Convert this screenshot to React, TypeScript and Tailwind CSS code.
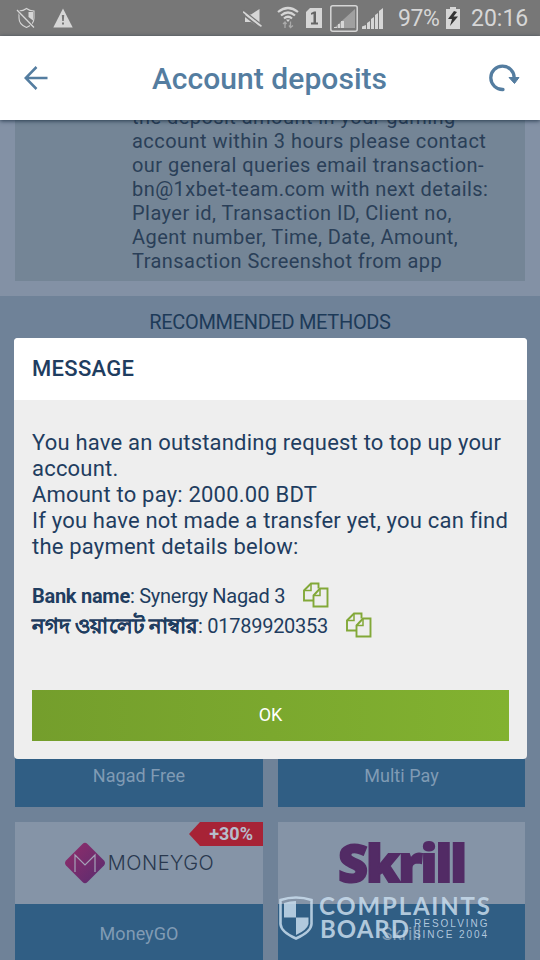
import type { ReactNode } from "react";

const NOTICE_LINES = [
  "the deposit amount in your gaming",
  "account within 3 hours please contact",
  "our general queries email transaction-",
  "bn@1xbet-team.com with next details:",
  "Player id, Transaction ID, Client no,",
  "Agent number, Time, Date, Amount,",
  "Transaction Screenshot from app",
];

const MESSAGE_LINES = [
  "You have an outstanding request to top up your",
  "account.",
  "Amount to pay: 2000.00 BDT",
  "If you have not made a transfer yet, you can find",
  "the payment details below:",
];

function StatusBar() {
  return (
    <div className="flex h-9 shrink-0 items-center bg-[#777777] text-[#d6d6d6]">
      {/* shield off */}
      <svg className="ml-4 h-[22px] w-[20px]" viewBox="0 0 20 22" fill="none" stroke="currentColor">
        <path d="M3 4 C6 4 8 3.500 10.5 1.5 C13 3.5 15.500 4 18 4 V11 C18 16 14.500 19 10.500 20.500 C6.500 19 3 16 3 11 Z" strokeWidth="1.1" />
        <path d="M12.500 5 H17 V13.500 L12.500 10 Z" fill="currentColor" stroke="none" />
        <path d="M1 3 L18 20.500" stroke="#777777" strokeWidth="3" />
        <path d="M1 3 L18 20.500" strokeWidth="1.3" />
      </svg>
      {/* warning */}
      <svg className="ml-[17px] h-[20px] w-[20px]" viewBox="0 0 20 20">
        <path d="M10 .5 L19.700 19.500 H.3 Z" fill="currentColor" />
        <path d="M8.800 7 H11.200 L10.800 13 H9.200 Z M9 14.500 H11 V16.500 H9 Z" fill="#777777" />
      </svg>

      <div className="ml-auto flex items-center">
        {/* muted speaker */}
        <svg className="h-[20px] w-[20px]" viewBox="0 0 20 20">
          <path d="M2 6.500 H8 L16.500 1 V19 L8 14 H2 Z" fill="currentColor" />
          <path d="M0 2 L19 17.500 M-1 5.500 L18 20.500" stroke="#777777" strokeWidth="1.800" />
          <path d="M0 3.700 L18.500 18.300" stroke="currentColor" strokeWidth="1.700" />
        </svg>
        {/* wifi */}
        <svg className="ml-[14px] h-[24px] w-[22px]" viewBox="0 0 22 24" fill="none" stroke="currentColor">
          <path d="M1 6 Q11 -2 21 6" strokeWidth="2.200" />
          <path d="M4 9.500 Q11 3.500 18 9.500" strokeWidth="2.200" />
          <path d="M7 12.500 Q11 9 15 12.500" strokeWidth="2.200" />
          <path d="M9 13.500 H13 L11 16 Z" fill="currentColor" stroke="none" />
          <path d="M8 22 V16 M6 18 L8 16 L9.500 18 M13.500 15.500 V21.500 M12 19.500 L13.500 21.500 L16 19.500" stroke="#aaaaaa" strokeWidth="1.300" />
        </svg>
        {/* sim slot */}
        <svg className="ml-[7px] h-[20px] w-[16px]" viewBox="0 0 16 20">
          <path d="M4 0 H16 V20 H0 V4 Z" fill="currentColor" />
          <path d="M5 5 L8 3.500 H10 V14.500 H12 V16.500 H5 V14.500 H7.500 V6 L5 6.800 Z" fill="#666666" />
        </svg>
        {/* first network */}
        <svg className="ml-[8px] h-[27px] w-[28px]" viewBox="0 0 28 27">
          <rect x=".8" y=".8" width="26.400" height="25.400" rx="2" fill="none" stroke="currentColor" strokeWidth="1.500" />
          <path d="M4 23 L25 4 V23 Z" fill="#a0a0a0" />
          <path d="M4 23 V22 H7 V23 Z M8 23 V19 H10 V23 Z M11 23 V16 H14 V23 Z" fill="currentColor" />
        </svg>
        {/* second network */}
        <svg className="ml-[4px] h-[22px] w-[22px]" viewBox="0 0 22 22" fill="currentColor">
          <path d="M0 22 V19.500 L4 18 V22 Z M5 22 V16 L8 14 V22 Z M9 22 V12 L12 10 V22 Z M13 22 V8 L16 6 V22 Z M17 22 V4 L21 1 V22 Z" />
        </svg>
        <span className="ml-[14px] w-[44px] whitespace-nowrap text-[23px] leading-none tracking-[-0.4px]">97%</span>
        {/* charging battery */}
        <svg className="ml-[4px] h-[22px] w-[14px]" viewBox="0 0 14 22">
          <path d="M4 0 H10 V2 H14 V22 H0 V2 H4 Z" fill="currentColor" />
          <path d="M8 4 L2 12 H6 L4 19 L12 9.500 H7.500 L11 5 Z" fill="#333333" />
        </svg>
        <span className="ml-[11px] mr-[12px] w-[57px] whitespace-nowrap pt-px text-[23px] leading-none">20:16</span>
      </div>
    </div>
  );
}

function Header() {
  return (
    <header className="relative z-10 flex h-[84px] shrink-0 items-center justify-between bg-white px-6 text-[#547da0] shadow-[0_1px_4px_rgba(20,40,60,0.8)]">
      <svg className="h-[24px] w-[24px]" viewBox="0 0 24 24" fill="none" stroke="currentColor" strokeWidth="2.500">
        <path d="M23.500 12 H2 M12.500 1 L1.700 12 L12.500 23" />
      </svg>
      <h1 className="ml-[3px] text-[30px] font-medium tracking-[0.05px]">Account deposits</h1>
      <svg className="-mr-[4px] h-[28px] w-[32px]" viewBox="0 0 32 28" fill="none">
        <path d="M15 25.500 A11.700 11.700 0 1 1 26.200 14" stroke="currentColor" strokeWidth="3.300" strokeLinecap="round" />
        <path d="M21 13.500 H31 L26.500 19.500 Z" fill="currentColor" stroke="currentColor" strokeLinejoin="round" />
      </svg>
    </header>
  );
}

function MoneyGoLogo() {
  return (
    <div className="flex items-center">
      <svg className="h-[42px] w-[42px]" viewBox="0 0 42 42">
        <defs>
          <linearGradient id="moneygo" x1="0" y1="0" x2="1" y2="1">
            <stop offset="0" stopColor="#922d6a" />
            <stop offset="1" stopColor="#582c70" />
          </linearGradient>
        </defs>
        <path d="M18.500 2 Q21 -.5 23.500 2 L40 18.500 Q42 21 40 23.500 L23.500 40 Q21 42.500 18.500 40 L2 23.500 Q0 21 2 18.500 Z" fill="url(#moneygo)" />
        <path d="M11 30 V13 L21 23 L31 13 V30" fill="none" stroke="#a4a2b8" strokeWidth="1.200" />
      </svg>
      <span className="ml-[2px] font-[Inter] text-[20px] font-light leading-none tracking-[0.5px] text-[#29384e]">MONEYGO</span>
    </div>
  );
}

function SkrillLogo() {
  return (
    <span className="pb-[2px] font-['Open_Sans'] text-[52px] font-extrabold leading-none tracking-[-2px] text-[#522b65] [-webkit-text-stroke:1.8px_#522b65]">Skrill</span>
  );
}

function Method({ name, badge, children }: { name: string; badge?: string; children?: ReactNode }) {
  return (
    <div className="relative h-[143px]">
      <div className="flex h-[82px] items-center justify-center bg-[#8594a7]">{children}</div>
      <div className="flex h-[61px] items-center justify-center bg-[#305e84] pb-[2px] text-[18px] tracking-[0.05px] text-[#809bb4]">{name}</div>
      {badge && (
        <span className="absolute right-0 top-0 flex h-6 w-[74px] items-center justify-end bg-[#a72336] pb-[2px] pr-[10px] text-[18px] font-bold text-[#b6bccb] [clip-path:polygon(0_50%,11px_0,100%_0,100%_100%,11px_100%)]">
          {badge}
        </span>
      )}
    </div>
  );
}

function CopyIcon() {
  return (
    <svg className="h-[26px] w-[26px]" viewBox="0 0 26 26" fill="none" stroke="#82a838" strokeWidth="1.900">
      <path d="M10 18.500 H1 V8.500 L8 1.500 H15.500 V6.500" />
      <path d="M8 1.500 V8.500 H1" strokeWidth="1.500" />
      <path d="M10.500 13.500 L17 6.500 H24.500 V24.500 H10.500 Z" />
      <path d="M17 6.500 V13.500 H10.500" strokeWidth="1.500" />
    </svg>
  );
}

function MessageDialog() {
  return (
    <div className="absolute left-[14px] top-[338px] z-20 flex h-[421px] w-[513px] flex-col overflow-hidden rounded-[4px] bg-[#eeeeee] text-[#1f3d60]">
      <div className="flex h-[62px] items-center bg-white px-[18px] pb-[2px] text-[22px] font-medium tracking-[0.3px]">MESSAGE</div>
      <div className="flex flex-1 flex-col px-[18px] pb-[18px] pt-[30px]">
        <div className="whitespace-nowrap text-[22px] leading-[26px] tracking-[0.2px]">
          {MESSAGE_LINES.map((line) => (
            <p key={line}>{line}</p>
          ))}
        </div>
        <div className="mt-[20px] whitespace-nowrap text-[20px] leading-[30px] tracking-[-0.27px]">
          <p className="flex h-[30px] items-center">
            <span className="pt-[2px]"><b className="font-bold">Bank name</b>: Synergy Nagad 3</span>
            <span className="ml-[18px]"><CopyIcon /></span>
          </p>
          <p className="flex h-[30px] items-center">
            <span className="pt-[2px]">
              <b className="text-[21px] font-bold leading-none tracking-[0.05px] [-webkit-text-stroke:0.2px_#1f3d60]">নগদ ওয়ালেট নাম্বার</b>: 01789920353
            </span>
            <span className="ml-[18px]"><CopyIcon /></span>
          </p>
        </div>
        <button className="mt-auto h-[51px] bg-linear-to-r from-[#749e2c] to-[#82b230] pb-[2px] text-[18px] text-white">OK</button>
      </div>
    </div>
  );
}

function Watermark() {
  return (
    <div className="absolute left-[278px] top-[895px] z-10 flex text-[#c8dcec]/85">
      <svg className="h-[46px] w-[36px]" viewBox="0 0 36 46">
        <path d="M2.500 5 Q10 2.500 18 2.500 Q26 2.500 33.500 5 V29 Q33 37 18 43.500 Q3 37 2.500 29 Z" fill="none" stroke="currentColor" strokeWidth="2.600" />
        <path d="M6 8 Q12 6 18 6 V22.500 H6 Z M18 22.500 H30.500 V29 Q29 35 18 40 Z" fill="currentColor" />
      </svg>
      <div className="-mt-px ml-[5px] font-[Lato] font-bold">
        <p className="h-[23px] whitespace-nowrap text-[24px] leading-[23px] tracking-[1.800px]">COMPLAINTS</p>
        <div className="flex">
          <p className="w-[95px] pl-px text-[24px] leading-[23px] tracking-[1px]">BOARD</p>
          <div className="whitespace-nowrap pt-px font-['Liberation_Sans'] text-[10px] font-normal leading-[11px] tracking-[2px]">
            <p>RESOLVING</p>
            <p className="tracking-[1.950px]">SINCE 2004</p>
          </div>
        </div>
      </div>
    </div>
  );
}

export default function App() {
  return (
    <div className="relative flex h-[960px] w-[540px] flex-col overflow-hidden bg-[#6f8298] font-[Roboto,'Noto_Sans',sans-serif]">
      <StatusBar />
      <Header />

      {/* NOTICE */}
      <section className="h-[176px] shrink-0 bg-[#8391a5] px-[15px] pb-[15px]">
        <div className="flex h-[161px] flex-col justify-end overflow-hidden bg-[#748596] pb-2 pl-[117px] text-[20px] leading-6 tracking-[0.45px] text-[#2a3f58]">
          {NOTICE_LINES.map((line) => (
            <p key={line} className="shrink-0 whitespace-nowrap">{line}</p>
          ))}
        </div>
      </section>

      {/* METHODS */}
      <section className="px-[15px]">
        <h2 className="flex h-[52px] items-center justify-center text-[20px] tracking-[-0.33px] text-[#1d3a58]">RECOMMENDED METHODS</h2>
        <div className="grid grid-cols-[248px_247px] gap-[15px] pt-[316px]">
          <Method name="Nagad Free" />
          <Method name="Multi Pay" />
          <Method name="MoneyGO" badge="+30%">
            <MoneyGoLogo />
          </Method>
          <Method name="Skrill">
            <SkrillLogo />
          </Method>
        </div>
      </section>

      <Watermark />
      <MessageDialog />
    </div>
  );
}
